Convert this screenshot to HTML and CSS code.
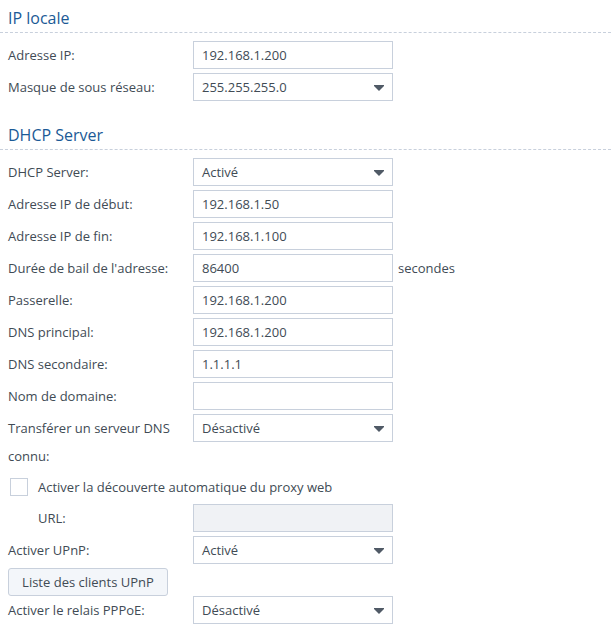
FILE: index.html
```html
<!DOCTYPE html>
<html lang="fr">
<head>
<meta charset="utf-8">
<title>Réseau local</title>
<link rel="stylesheet" href="styles.css">
</head>
<body>
<section class="section">
  <h2 class="section-title">IP locale</h2>
  <div class="rows">
    <div class="row"><label class="label">Adresse IP:</label><div class="field">192.168.1.200</div></div>
    <div class="row"><label class="label">Masque de sous réseau:</label><div class="field select">255.255.255.0<svg class="arrow" width="10" height="6" viewBox="0 0 10 6"><path d="M0 0H10V1L5 6L0 1Z"/></svg></div></div>
  </div>
</section>
<section class="section">
  <h2 class="section-title">DHCP Server</h2>
  <div class="rows">
    <div class="row"><label class="label">DHCP Server:</label><div class="field select">Activé<svg class="arrow" width="10" height="6" viewBox="0 0 10 6"><path d="M0 0H10V1L5 6L0 1Z"/></svg></div></div>
    <div class="row"><label class="label">Adresse IP de début:</label><div class="field">192.168.1.50</div></div>
    <div class="row"><label class="label">Adresse IP de fin:</label><div class="field">192.168.1.100</div></div>
    <div class="row"><label class="label">Durée de bail de l'adresse:</label><div class="field">86400</div><span class="unit">secondes</span></div>
    <div class="row"><label class="label">Passerelle:</label><div class="field">192.168.1.200</div></div>
    <div class="row"><label class="label">DNS principal:</label><div class="field">192.168.1.200</div></div>
    <div class="row"><label class="label">DNS secondaire:</label><div class="field">1.1.1.1</div></div>
    <div class="row"><label class="label">Nom de domaine:</label><div class="field"></div></div>
    <div class="row"><label class="label">Transférer un serveur DNS connu:</label><div class="field select">Désactivé<svg class="arrow" width="10" height="6" viewBox="0 0 10 6"><path d="M0 0H10V1L5 6L0 1Z"/></svg></div></div>
    <div class="check-row"><span class="checkbox"></span><span class="check-label">Activer la découverte automatique du proxy web</span></div>
    <div class="row"><label class="label sub">URL:</label><div class="field disabled"></div></div>
    <div class="row"><label class="label">Activer UPnP:</label><div class="field select">Activé<svg class="arrow" width="10" height="6" viewBox="0 0 10 6"><path d="M0 0H10V1L5 6L0 1Z"/></svg></div></div>
    <div class="button-row"><button class="button" type="button">Liste des clients UPnP</button></div>
    <div class="row"><label class="label">Activer le relais PPPoE:</label><div class="field select">Désactivé<svg class="arrow" width="10" height="6" viewBox="0 0 10 6"><path d="M0 0H10V1L5 6L0 1Z"/></svg></div></div>
  </div>
</section>
</body>
</html>
```

FILE: styles.css
```css
html, body {
  margin: 0;
  padding: 0;
  background: #ffffff;
}

body {
  font-family: "Open Sans", "Noto Sans", "Liberation Sans", sans-serif;
  font-size: 13px;
  color: #414b55;
  width: 611px;
}

.section {
  margin-bottom: 16px;
}

.section-title {
  margin: 0;
  padding: 6px 8px 0;
  box-sizing: border-box;
  height: 33px;
  line-height: 24px;
  font-size: 16px;
  font-weight: normal;
  color: #1b5a96;
  border-bottom: 1px dashed #c8d0dc;
}

.rows {
  display: flex;
  flex-direction: column;
  gap: 4px;
  padding: 8px 0 0 8px;
}

.row {
  display: grid;
  grid-template-columns: 185px 200px auto;
  align-items: start;
}

.label {
  line-height: 28px;
  padding-right: 12px;
}

.label.sub {
  padding-left: 30px;
}

.field {
  position: relative;
  height: 28px;
  box-sizing: border-box;
  border: 1px solid #c8d0dc;
  padding: 0 8px;
  line-height: 26px;
  color: #414b55;
  background: #ffffff;
}

.field.disabled {
  background: #f0f2f5;
}

.arrow {
  position: absolute;
  right: 8px;
  top: 11px;
  fill: #505a66;
}

.unit {
  line-height: 28px;
  padding-left: 5px;
}

.check-row {
  display: flex;
  align-items: center;
  height: 26px;
  padding-left: 2px;
}

.checkbox {
  width: 18px;
  height: 18px;
  box-sizing: border-box;
  border: 1px solid #c8d0dc;
  background: #ffffff;
  margin-right: 10px;
}

.button-row {
  display: flex;
  margin-bottom: -4px;
}

.button {
  width: 160px;
  height: 28px;
  box-sizing: border-box;
  border: 1px solid #c8d0dc;
  border-radius: 3px;
  background: #f3f6fa;
  font-family: inherit;
  font-size: 13px;
  color: #414b55;
  padding: 0;
}
```
